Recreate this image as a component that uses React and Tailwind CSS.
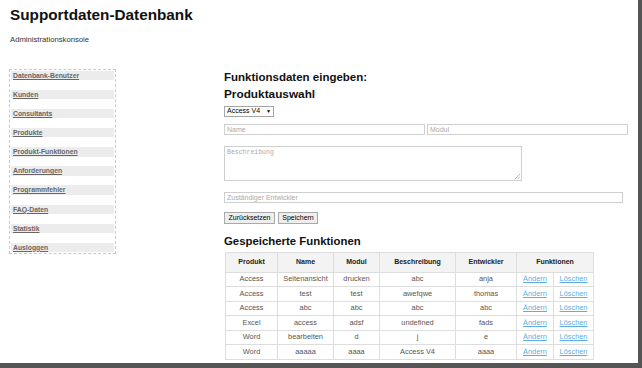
const navItems = [
  "Datenbank-Benutzer",
  "Kunden",
  "Consultants",
  "Produkte",
  "Produkt-Funktionen",
  "Anforderungen",
  "Programmfehler",
  "FAQ-Daten",
  "Statistik",
  "Ausloggen",
];

const rows = [
  ["Access", "Seitenansicht", "drucken", "abc", "anja"],
  ["Access", "test", "test", "awefqwe", "thomas"],
  ["Access", "abc", "abc", "abc", "abc"],
  ["Excel", "access", "adsf", "undefined", "fads"],
  ["Word", "bearbeiten", "d", "j", "e"],
  ["Word", "aaaaa", "aaaa", "Access V4", "aaaa"],
];

export default function App() {
  return (
    <div className="w-[642px] h-[368px] bg-white border-r-[4px] border-b-[5px] border-[#555] overflow-hidden font-['Liberation_Sans',Arial,sans-serif] text-[#222]">
      {/* Header */}
      <div className="pl-[10px] pt-[6px]">
        <h1 className="text-[15.3px] leading-[18px] font-bold text-[#111]">Supportdaten-Datenbank</h1>
        <p className="mt-[11px] text-[7.7px] leading-[10px] text-[#333]">Administrationskonsole</p>
      </div>

      <div className="flex mt-[24px] pl-[9px]">
        {/* Sidebar */}
        <div className="w-[107px] self-start border border-dashed border-[#c8c8c8] p-px">
          <ul className="flex flex-col gap-[9.9px]">
            {navItems.map((item) => (
              <li key={item} className="h-[9.2px] bg-[#ececec] pl-[2px] text-[6.8px] leading-[9.2px] font-bold text-[#666] underline">
                {item}
              </li>
            ))}
          </ul>
        </div>

        {/* Main */}
        <div className="ml-[108px] pt-px">
          <h2 className="text-[11.5px] leading-[14px] font-bold text-[#111]">Funktionsdaten eingeben:</h2>
          <h2 className="mt-[2.5px] text-[11.8px] leading-[14px] font-bold text-[#111]">Produktauswahl</h2>

          <div className="mt-[5.5px] w-[50px] h-[11px] border border-[#a5a5a5] flex items-center justify-between px-[2px] text-[7px] text-black">
            <span>Access V4</span>
            <span className="text-[5px]">▼</span>
          </div>

          <div className="mt-[7px] flex gap-[2px]">
            <div className="w-[201px] h-[11px] border border-[#cfcfcf] px-[2px] text-[7px] leading-[9px] text-[#aaa]">Name</div>
            <div className="w-[201px] h-[11px] border border-[#cfcfcf] px-[2px] text-[7px] leading-[9px] text-[#aaa]">Modul</div>
          </div>

          <div className="mt-[11px] w-[298px] h-[35px] border border-[#cfcfcf] relative px-[2px] pt-px text-[6.5px] leading-[9px] text-[#aaa] font-['Liberation_Mono',monospace]">
            Beschreibung
            <svg className="absolute right-px bottom-px" width="5" height="5" viewBox="0 0 5 5">
              <path d="M5 0L0 5M5 2.5L2.5 5" stroke="#999" strokeWidth="0.7" />
            </svg>
          </div>

          <div className="mt-[11px] w-[399px] h-[11px] border border-[#cfcfcf] px-[2px] text-[7px] leading-[9px] text-[#aaa]">Zuständiger Entwickler</div>

          <div className="mt-[9px] flex gap-[3px]">
            <button className="h-[11.5px] w-[51px] border border-[#a9a9a9] bg-[#eeeeee] text-[7px] leading-[9px] text-black">Zurücksetzen</button>
            <button className="h-[11.5px] w-[40px] border border-[#a9a9a9] bg-[#eeeeee] text-[7px] leading-[9px] text-black">Speichern</button>
          </div>

          <h2 className="mt-[10px] text-[11.4px] leading-[14px] font-bold text-[#111]">Gespeicherte Funktionen</h2>

          <table className="mt-[4px] ml-px border-collapse text-center text-[7.4px] text-[#555]">
            <colgroup>
              <col className="w-[52px]" />
              <col className="w-[56px]" />
              <col className="w-[46px]" />
              <col className="w-[76px]" />
              <col className="w-[61px]" />
              <col className="w-[37px]" />
              <col className="w-[40px]" />
            </colgroup>
            <thead>
              <tr className="h-[20px] bg-[#f3f3f3] text-[#222] text-[7px] font-bold">
                <th className="border border-[#ddd]">Produkt</th>
                <th className="border border-[#ddd]">Name</th>
                <th className="border border-[#ddd]">Modul</th>
                <th className="border border-[#ddd]">Beschreibung</th>
                <th className="border border-[#ddd]">Entwickler</th>
                <th colSpan={2} className="border border-[#ddd]">Funktionen</th>
              </tr>
            </thead>
            <tbody>
              {rows.map((r, i) => (
                <tr key={i} className="h-[14.5px]">
                  {r.map((c, j) => (
                    <td key={j} className="border border-[#ddd] p-0 leading-[10px]">{c}</td>
                  ))}
                  <td className="border border-[#ddd] p-0 leading-[10px] text-[#5ab0de] underline">Ändern</td>
                  <td className="border border-[#ddd] p-0 leading-[10px] text-[#5ab0de] underline">Löschen</td>
                </tr>
              ))}
            </tbody>
          </table>
        </div>
      </div>
    </div>
  );
}
